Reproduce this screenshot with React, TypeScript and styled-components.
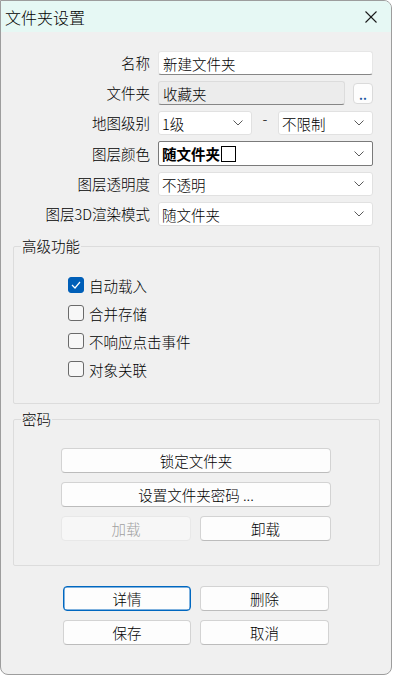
import React, { ReactElement } from 'react';
import styled, { createGlobalStyle } from 'styled-components';

const GlobalStyle = createGlobalStyle`
  html, body {
    margin: 0;
    padding: 0;
    background: #ffffff;
  }
  body {
    font-family: "Noto Sans CJK SC", "Noto Sans", sans-serif;
    font-size: 14.5px;
    font-weight: 300;
    color: #000;
  }
`;

const Chevron = (): ReactElement => (
  <svg width="10" height="6" viewBox="0 0 10 6">
    <polyline points="0.5,0.5 5,5 9.5,0.5" fill="none" stroke="#5a5a5a" strokeWidth="1" />
  </svg>
);

const CloseIcon = (): ReactElement => (
  <svg width="12" height="12" viewBox="0 0 12 12">
    <line x1="0.5" y1="0.5" x2="11.5" y2="11.5" stroke="#1a1a1a" strokeWidth="1.1" />
    <line x1="11.5" y1="0.5" x2="0.5" y2="11.5" stroke="#1a1a1a" strokeWidth="1.1" />
  </svg>
);

const CheckMark = (): ReactElement => (
  <svg width="10" height="8" viewBox="0 0 10 8">
    <polyline points="1,4 4,7 9,1" fill="none" stroke="#ffffff" strokeWidth="1.2" />
  </svg>
);

const options = [
  { label: '自动载入', checked: true },
  { label: '合并存储', checked: false },
  { label: '不响应点击事件', checked: false },
  { label: '对象关联', checked: false },
];

const App: React.FC = (): ReactElement => (
  <>
    <GlobalStyle />
    <Window>
      <TitleBar>
        <Title>文件夹设置</Title>
        <CloseButton type="button"><CloseIcon /></CloseButton>
      </TitleBar>
      <Body>
        <Form>
          <Label>名称</Label>
          <TextInput>新建文件夹</TextInput>

          <Label>文件夹</Label>
          <FolderRow>
            <TextInput $readOnly>收藏夹</TextInput>
            <DotsButton type="button">..</DotsButton>
          </FolderRow>

          <Label>地图级别</Label>
          <LevelRow>
            <Select><span>1级</span><Chevron /></Select>
            <Dash>-</Dash>
            <Select><span>不限制</span><Chevron /></Select>
          </LevelRow>

          <Label>图层颜色</Label>
          <Select $active>
            <ColorValue>随文件夹<Swatch /></ColorValue>
            <Chevron />
          </Select>

          <Label>图层透明度</Label>
          <Select><span>不透明</span><Chevron /></Select>

          <Label>图层3D渲染模式</Label>
          <Select><span>随文件夹</span><Chevron /></Select>
        </Form>

        <Group $top={12}>
          <Legend>高级功能</Legend>
          <CheckList>
            {options.map(({ label, checked }) => (
              <CheckRow key={label}>
                <CheckBox $checked={checked}>{checked && <CheckMark />}</CheckBox>
                <span>{label}</span>
              </CheckRow>
            ))}
          </CheckList>
        </Group>

        <Group $top={7}>
          <Legend>密码</Legend>
          <PasswordButtons>
            <Button type="button" $wide>锁定文件夹</Button>
            <Button type="button" $wide>设置文件夹密码 ...</Button>
            <Button type="button" disabled>加载</Button>
            <Button type="button">卸载</Button>
          </PasswordButtons>
        </Group>

        <Footer>
          <Button type="button" $focused>详情</Button>
          <Button type="button">删除</Button>
          <Button type="button">保存</Button>
          <Button type="button">取消</Button>
        </Footer>
      </Body>
    </Window>
  </>
);

const Window = styled.div`
  width: 392px;
  height: 675px;
  box-sizing: border-box;
  border: 1px solid #9d9d9d;
  border-radius: 0 8px 8px 8px;
  overflow: hidden;
  background: #f0f0f0;
  display: flex;
  flex-direction: column;
`;

const TitleBar = styled.div`
  height: 31px;
  flex-shrink: 0;
  background: #e6f8f4;
  display: flex;
  align-items: center;
  justify-content: space-between;
  padding: 0 14px 0 4px;
`;

const Title = styled.div`
  font-size: 16px;
  line-height: 20px;
`;

const CloseButton = styled.button`
  border: none;
  background: transparent;
  padding: 0;
  width: 12px;
  height: 12px;
  display: flex;
`;

const Body = styled.div`
  padding: 19px 11px 0 12px;
  display: flex;
  flex-direction: column;
`;

const Form = styled.div`
  display: grid;
  grid-template-columns: 137px 215px;
  grid-template-rows: 24px 24px 24px 25px 24px 24px;
  column-gap: 8px;
  row-gap: 6px;
  align-items: center;
`;

const Label = styled.div`
  text-align: right;
  line-height: 24px;
  white-space: nowrap;
`;

const TextInput = styled.div<{ $readOnly?: boolean }>`
  height: 24px;
  box-sizing: border-box;
  flex: 1;
  display: flex;
  align-items: center;
  padding: 0 4px;
  background: ${({ $readOnly }) => ($readOnly ? '#ececec' : '#ffffff')};
  border: 1px solid ${({ $readOnly }) => ($readOnly ? '#dcdcdc' : '#e6e6e6')};
  border-bottom-color: #868686;
  border-radius: 3px;
`;

const FolderRow = styled.div`
  display: flex;
  align-items: center;
  gap: 8px;
`;

const DotsButton = styled.button`
  width: 20px;
  height: 21px;
  box-sizing: border-box;
  padding: 0 0 3px;
  background: #fdfdfd;
  border: 1px solid #dadada;
  border-radius: 4px;
  color: #1a55a0;
  font-family: inherit;
  font-size: 12px;
  font-weight: bold;
  display: flex;
  align-items: flex-end;
  justify-content: center;
  line-height: 10px;
`;

const LevelRow = styled.div`
  display: grid;
  grid-template-columns: 94px 1fr 95px;
  align-items: center;
`;

const Dash = styled.span`
  text-align: center;
  line-height: 14px;
  margin-top: -8px;
`;

const Select = styled.div<{ $active?: boolean }>`
  height: ${({ $active }) => ($active ? 25 : 24)}px;
  box-sizing: border-box;
  display: flex;
  align-items: center;
  justify-content: space-between;
  padding: 0 8px 0 3px;
  background: #ffffff;
  border: 1px solid ${({ $active }) => ($active ? '#7a7a7a' : '#e1e1e1')};
  border-radius: ${({ $active }) => ($active ? 2 : 3)}px;
`;

const ColorValue = styled.span`
  display: flex;
  align-items: center;
  font-weight: bold;
  gap: 1px;
`;

const Swatch = styled.span`
  width: 15px;
  height: 16px;
  box-sizing: border-box;
  border: 1px solid #000;
  background: #fff;
`;

const Group = styled.fieldset<{ $top: number }>`
  margin: ${({ $top }) => $top}px 0 0;
  padding: 0;
  border: 1px solid #dcdcdc;
  border-radius: 2px;
  min-width: 0;
`;

const Legend = styled.legend`
  margin-left: 7px;
  padding: 0 1px;
  line-height: 16px;
`;

const CheckList = styled.div`
  display: flex;
  flex-direction: column;
  padding: 17px 0 20px 54px;
`;

const CheckRow = styled.div`
  height: 28px;
  display: flex;
  align-items: center;
  gap: 5px;
`;

const CheckBox = styled.span<{ $checked: boolean }>`
  width: 16px;
  height: 16px;
  box-sizing: border-box;
  border-radius: 3px;
  display: flex;
  align-items: center;
  justify-content: center;
  background: ${({ $checked }) => ($checked ? '#005fb8' : '#f7f7f7')};
  border: 1px solid ${({ $checked }) => ($checked ? '#005fb8' : '#6a6a6a')};
`;

const PasswordButtons = styled.div`
  display: grid;
  grid-template-columns: 130px 131px;
  grid-auto-rows: 25px;
  gap: 9px;
  padding: 21px 0 24px 47px;
`;

const Button = styled.button<{ $wide?: boolean; $focused?: boolean }>`
  grid-column: ${({ $wide }) => ($wide ? 'span 2' : 'auto')};
  height: 25px;
  box-sizing: border-box;
  padding: 0;
  font-family: inherit;
  font-size: 14.5px;
  font-weight: 300;
  color: #000;
  background: #fdfdfd;
  border: 1px solid ${({ $focused }) => ($focused ? '#0067c0' : '#d3d3d3')};
  border-bottom-color: ${({ $focused }) => ($focused ? '#0067c0' : '#bcbcbc')};
  border-radius: 4px;
  box-shadow: ${({ $focused }) => ($focused ? 'inset 0 0 0 0.5px #0067c0' : 'none')};

  &:disabled {
    background: #f7f7f7;
    border-color: #e8e8e8;
    color: #a0a0a0;
  }
`;

const Footer = styled.div`
  display: grid;
  grid-template-columns: 128px 129px;
  grid-auto-rows: 25px;
  gap: 9px;
  margin: 20px 0 0 50px;
`;

export default App;
